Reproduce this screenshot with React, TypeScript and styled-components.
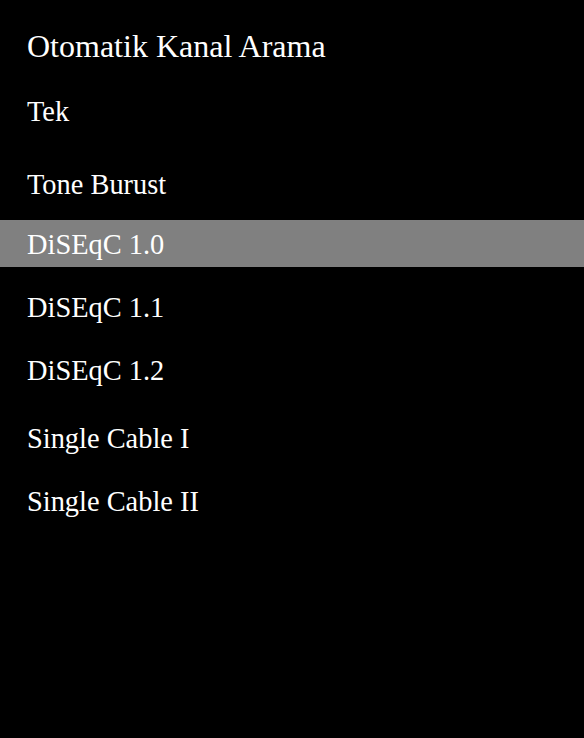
import styled, { createGlobalStyle } from 'styled-components';

const GlobalStyle = createGlobalStyle`
  html, body {
    margin: 0;
    padding: 0;
    background: #000;
  }
`;

const Screen = styled.div`
  width: 584px;
  height: 738px;
  background: #000;
  color: #fff;
  font-family: "Liberation Serif", "Times New Roman", serif;
  display: flex;
  flex-direction: column;
  padding-top: 26px;
  box-sizing: border-box;
  overflow: hidden;
`;

const Title = styled.h1`
  margin: 0;
  padding: 0 27px;
  font-size: 32px;
  font-weight: normal;
  line-height: 40px;
`;

const Menu = styled.ul`
  list-style: none;
  margin: 0;
  padding: 0;
  display: flex;
  flex-direction: column;
`;

const Item = styled.li<{ $gap: number; $selected?: boolean }>`
  margin-top: ${(p) => p.$gap}px;
  padding: 1px 27px 0;
  height: 47px;
  box-sizing: border-box;
  line-height: 47px;
  font-size: 28.4px;
  white-space: nowrap;
  overflow: hidden;
  background: ${(p) => (p.$selected ? '#808080' : 'transparent')};
`;

const items = [
  { label: 'Tek', gap: 21 },
  { label: 'Tone Burust', gap: 26 },
  { label: 'DiSEqC 1.0', gap: 13, selected: true },
  { label: 'DiSEqC 1.1', gap: 16 },
  { label: 'DiSEqC 1.2', gap: 16 },
  { label: 'Single Cable I', gap: 21 },
  { label: 'Single Cable II', gap: 16 },
];

export default function App() {
  return (
    <>
      <GlobalStyle />
      <Screen>
        <Title>Otomatik Kanal Arama</Title>
        <Menu>
          {items.map((it) => (
            <Item key={it.label} $gap={it.gap} $selected={it.selected}>
              {it.label}
            </Item>
          ))}
        </Menu>
      </Screen>
    </>
  );
}
